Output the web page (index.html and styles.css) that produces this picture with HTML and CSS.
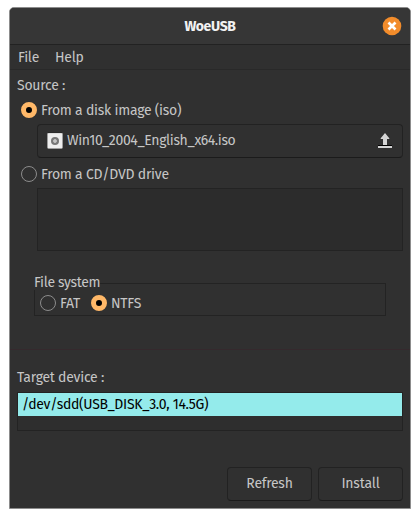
FILE: index.html
```html
<!DOCTYPE html>
<html lang="en">
<head>
<meta charset="utf-8">
<title>WoeUSB</title>
<link rel="stylesheet" href="styles.css">
</head>
<body>
<main class="window">
  <header class="titlebar">
    <h1 class="title">WoeUSB</h1>
    <button class="close" aria-label="Close"><svg width="20" height="20" viewBox="0 0 20 20"><circle cx="10" cy="10" r="9.3"/><path d="M6.5 6.5l7 7M13.5 6.5l-7 7"/></svg></button>
  </header>
  <nav class="menubar"><span>File</span><span>Help</span></nav>
  <div class="content">
    <div class="label"><span>Source :</span></div>
    <div class="option first"><i class="radio on"></i><span>From a disk image (iso)</span></div>
    <div class="file-picker">
      <svg class="disk" width="16" height="17" viewBox="0 0 16 17"><path class="shade" d="M1 0h14v3H1z"/><rect class="case" x=".5" y="1" width="15" height="15.5" rx="1"/><circle class="disc" cx="8" cy="9" r="4"/><circle class="ring" cx="8" cy="9" r="1.7"/><circle class="disc" cx="8" cy="9" r=".7"/></svg>
      <span class="filename">Win10_2004_English_x64.iso</span>
      <svg class="upload" width="14" height="16" viewBox="0 0 14 16"><path class="shade" d="M0 12h14v1H0z"/><path class="arrow" d="M7 0l4.3 5.2V6H9v6H5V6H2.7v-.8zM0 13h14v2H0z"/></svg>
    </div>
    <div class="option second"><i class="radio"></i><span>From a CD/DVD drive</span></div>
    <div class="drives"></div>
    <section class="filesystem">
      <div class="legend"><span>File system</span></div>
      <div class="choices"><i class="radio"></i><span>FAT</span><i class="radio on"></i><span>NTFS</span></div>
    </section>
    <div class="label target"><span>Target device :</span></div>
    <div class="devices"><div class="selected"><span>/dev/sdd(USB_DISK_3.0, 14.5G)</span></div></div>
    <div class="actions"><button class="button"><span>Refresh</span></button><button class="button"><span class="install">Install</span></button></div>
  </div>
</main>
</body>
</html>
```
FILE: styles.css
```css
* { box-sizing: border-box; }
body {
  margin: 0;
  padding: 7px 9px 9px;
  background: #fff;
  font: 14px/20px "Fira Sans", Roboto, sans-serif;
  color: #c6c6c6;
}
span { white-space: nowrap; letter-spacing: -.24px; }
.window {
  width: 402px;
  height: 502px;
  border: 1px solid #8c8c8c;
  border-radius: 5px 5px 0 0;
  background: #303030 linear-gradient(#35292d, #35292d) 0 341px / 100% 1px no-repeat;
  overflow: hidden;
}
.titlebar {
  display: grid;
  grid-template-columns: 1fr auto 1fr;
  align-items: center;
  height: 37px;
  padding-right: 8px;
  background: #363636;
  border-bottom: 1px solid #222;
}
.title { grid-column: 2; margin: 2px 0 0 8px; font-size: 14px; font-weight: 700; line-height: 20px; letter-spacing: -.35px; color: #f2f2f2; }
.close { justify-self: end; width: 20px; height: 20px; padding: 0; border: 0; background: none; }
.close svg { display: block; }
.close circle { fill: #f28c2b; }
.close path { stroke: #fff; stroke-width: 2.7; fill: none; }
.menubar { display: flex; gap: 16px; height: 25px; padding: 3px 8px 0; border-bottom: 1px solid #292929; }
.content { padding: 5px 7px 0; }
.label { height: 20px; padding-top: 1px; }
.option { display: flex; align-items: center; gap: 4px; height: 20px; padding-left: 4px; }
.option span { padding-top: 2px; }
.option.first { margin-top: 5px; }
.radio { flex: none; width: 16px; height: 16px; border: 1px solid #8c8c8c; border-radius: 50%; }
.radio.on { border: 5px solid #ffb868; background: #000; }
.file-picker {
  display: flex;
  align-items: center;
  height: 34px;
  margin: 4px 0 0 20px;
  padding: 0 10px 2px 9px;
  border: 1px solid #222;
  border-bottom-color: #1b1b1b;
  border-radius: 4px;
}
.filename { padding-top: 2px; letter-spacing: -.36px; }
.disk { margin-right: 4px; }
.disk .case { fill: #eee; stroke: #aaa; stroke-width: .5; }
.disc { fill: #777; }
.ring { fill: #eee; }
.shade { fill: #000; }
.upload { margin: 1px 0 0 auto; }
.arrow { fill: #d4d4d4; }
.option.second { margin-top: 6px; }
.drives { height: 63px; margin: 4px 0 0 20px; border: 1px solid #232323; background: #2c2c2c; }
.filesystem { width: 352px; height: 44px; margin: 21px 0 0 17px; }
.legend { display: flex; align-items: flex-start; height: 18px; }
.legend span { padding-top: 1px; letter-spacing: -.32px; }
.legend::after { content: ""; flex: 1; height: 7px; margin-top: 11px; border: solid #232323; border-width: 1px 1px 0 0; }
.choices { display: flex; align-items: center; height: 26px; padding: 0 5px; border: 1px solid #232323; border-top: 0; }
.choices span { margin-left: 4px; padding-top: 2px; }
.choices .radio + span + .radio { margin-left: 11px; }
.label.target { margin-top: 51px; }
.devices { height: 39px; margin-top: 5px; border: 1px solid #232323; background: #2e2e2e; }
.selected { height: 23px; padding: 2px 4px 0; background: #94ebeb; color: #000; }
.selected span { letter-spacing: -.31px; }
.actions { display: flex; justify-content: flex-end; gap: 6px; margin-top: 36px; }
.button {
  width: 85px;
  height: 34px;
  padding: 0;
  border: 1px solid #222;
  border-bottom-color: #1b1b1b;
  border-radius: 4px;
  background: #303030;
  color: inherit;
  font: inherit;
}
.button .install { letter-spacing: -.2px; }
```
